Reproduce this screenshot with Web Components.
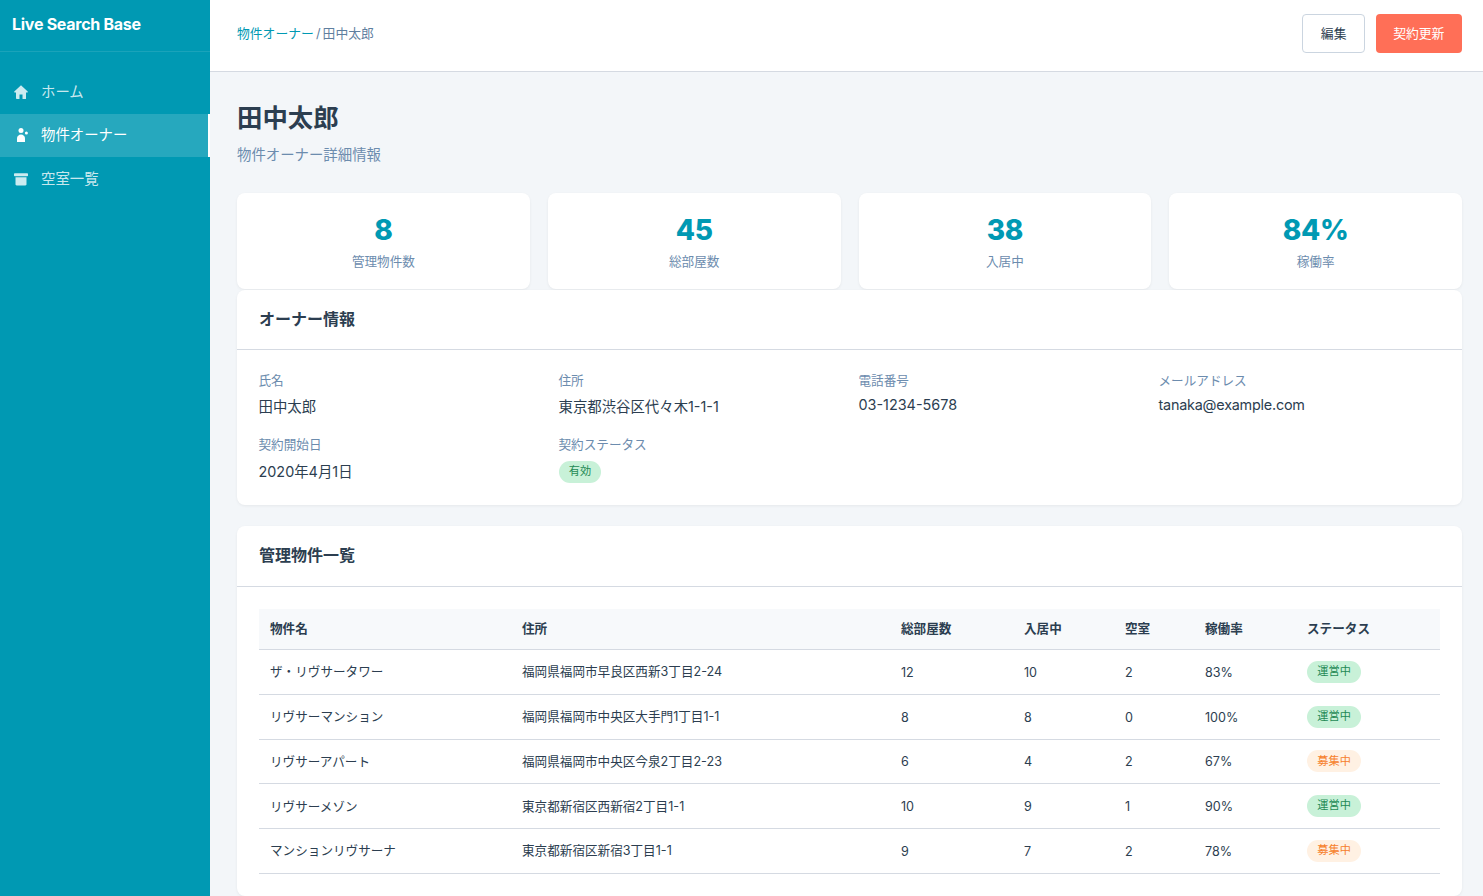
<!DOCTYPE html>
<html lang="ja">
<head>
<meta charset="utf-8">
<title>田中太郎</title>
<style>
  html, body { margin: 0; height: 100%; overflow: hidden; }
  body {
    font-family: Inter, "Noto Sans CJK JP", sans-serif;
    color: #2c3e50;
    background: #f3f6f9;
  }
  app-shell { height: 896px; }
</style>
</head>
<body>

<app-shell>
  <side-bar slot="side" brand="Live Search Base">
    <nav-item icon="home">ホーム</nav-item>
    <nav-item icon="people" active>物件オーナー</nav-item>
    <nav-item icon="box">空室一覧</nav-item>
  </side-bar>

  <top-bar slot="top">
    <span slot="crumb"><a>物件オーナー</a> / 田中太郎</span>
    <ui-button>編集</ui-button>
    <ui-button primary>契約更新</ui-button>
  </top-bar>

  <page-head title="田中太郎" sub="物件オーナー詳細情報"></page-head>

  <stat-row>
    <stat-card value="8" label="管理物件数"></stat-card>
    <stat-card value="45" label="総部屋数"></stat-card>
    <stat-card value="38" label="入居中"></stat-card>
    <stat-card value="84%" label="稼働率"></stat-card>
  </stat-row>

  <info-card heading="オーナー情報">
    <owner-info></owner-info>
  </info-card>

  <info-card heading="管理物件一覧" style="margin-top:21px; --head-h:60.6px">
    <property-table></property-table>
  </info-card>
</app-shell>

<script>
const ICONS = {
  home: '<path d="M7 .2.3 6.600c-.3.3-.1.9.3.9H2v5.700c0 .5.3.8.8.8h2.700V9.500h3v4.900h2.700c.5 0 .8-.3.8-.8V7.500h1.400c.4 0 .6-.6.3-.9z"/>',
  people: '<circle cx="7" cy="2.600" r="2.500"/><path d="M3 14V10.500C3 8.300 4.800 6.600 7 6.600s4 1.700 4 3.900V14z"/><circle cx="12.400" cy="5" r="1.500"/>',
  box: '<rect y="1.300" width="14" height="3" rx=".8"/><path d="M1.500 5.300h11v7c0 .6-.5 1.100-1.100 1.100H2.600c-.6 0-1.100-.5-1.100-1.100z"/>'
};

class AppShell extends HTMLElement {
  constructor() {
    super();
    this.attachShadow({ mode: 'open' }).innerHTML = `
      <style>
        :host { display: grid; grid-template-columns: 210px 1fr; overflow: hidden; }
        .col { display: flex; flex-direction: column; min-width: 0; height: 896px; overflow: hidden; }
        main { padding: 0 21px 0 27px; display: flex; flex-direction: column; }
      </style>
      <slot name="side"></slot>
      <div class="col">
        <slot name="top"></slot>
        <main><slot></slot></main>
      </div>`;
  }
}

class SideBar extends HTMLElement {
  constructor() {
    super();
    this.attachShadow({ mode: 'open' }).innerHTML = `
      <style>
        :host { display: block; background: #0099b3; height: 896px; }
        .brand {
          height: 52px; box-sizing: border-box; padding: 0 0 3px 12px;
          display: flex; align-items: center;
          font-size: 16px; font-weight: 700; color: #fff; letter-spacing: -.27px;
          border-bottom: 1px solid rgba(255,255,255,.1);
        }
        nav { padding-top: 18px; display: flex; flex-direction: column; }
      </style>
      <div class="brand"></div>
      <nav><slot></slot></nav>`;
    this.shadowRoot.querySelector('.brand').textContent = this.getAttribute('brand');
  }
}

class NavItem extends HTMLElement {
  constructor() {
    super();
    const active = this.hasAttribute('active');
    this.attachShadow({ mode: 'open' }).innerHTML = `
      <style>
        :host {
          display: flex; align-items: center; height: 43.5px; box-sizing: border-box;
          padding-left: 14px; gap: 13px; font-size: 14.4px;
          color: rgba(255,255,255,${active ? 1 : .8});
          background: ${active ? 'rgba(255,255,255,.15)' : 'transparent'};
          border-right: ${active ? '2px solid #fff' : '0'};
        }
        svg { width: 14px; height: 14px; fill: currentColor; flex: none; }
        span { padding-bottom: 3.5px; }
      </style>
      <svg viewBox="0 0 14 14">${ICONS[this.getAttribute('icon')]}</svg>
      <span><slot></slot></span>`;
  }
}

class TopBar extends HTMLElement {
  constructor() {
    super();
    this.attachShadow({ mode: 'open' }).innerHTML = `
      <style>
        :host {
          display: flex; align-items: center; justify-content: space-between;
          height: 72px; box-sizing: border-box; flex: none;
          padding: 0 21px 4px 27px; background: #fff; border-bottom: 1px solid #d5dae2;
          font-size: 12.8px; color: #5f7f9f;
        }
        .actions { display: flex; gap: 10.6px; }
        ::slotted(span) { color: #5f7f9f; margin-top: -3px; word-spacing: -1.5px; }
      </style>
      <slot name="crumb"></slot>
      <div class="actions"><slot></slot></div>`;
    const link = this.querySelector('a');
    if (link) link.style.color = '#0099b3';
  }
}

class UiButton extends HTMLElement {
  constructor() {
    super();
    const primary = this.hasAttribute('primary');
    this.attachShadow({ mode: 'open' }).innerHTML = `
      <style>
        :host {
          display: flex; align-items: center; justify-content: center;
          height: 39px; box-sizing: border-box; padding: 0 17.6px 3px;
          border-radius: 4px; font-size: 12.8px;
          background: ${primary ? '#ff6f57' : '#fff'};
          color: ${primary ? '#fff' : '#2c3e50'};
          border: ${primary ? '0' : '1px solid #cbd5e0'};
        }
      </style>
      <slot></slot>`;
  }
}

class PageHead extends HTMLElement {
  constructor() {
    super();
    this.attachShadow({ mode: 'open' }).innerHTML = `
      <style>
        :host { display: block; padding-top: 29px; margin-bottom: 28px; }
        h1 { margin: 0; font-size: 25.4px; line-height: 34px; font-weight: 700; color: #2c3e50; }
        p { margin: 10px 0 0; font-size: 14.4px; line-height: 20px; color: #6c8cae; }
      </style>
      <h1></h1><p></p>`;
    this.shadowRoot.querySelector('h1').textContent = this.getAttribute('title');
    this.shadowRoot.querySelector('p').textContent = this.getAttribute('sub');
    this.removeAttribute('title');
  }
}

class StatRow extends HTMLElement {
  constructor() {
    super();
    this.attachShadow({ mode: 'open' }).innerHTML = `
      <style>:host { display: grid; grid-template-columns: repeat(4, 1fr); gap: 18px; margin-bottom: 1px; }</style>
      <slot></slot>`;
  }
}

class StatCard extends HTMLElement {
  constructor() {
    super();
    this.attachShadow({ mode: 'open' }).innerHTML = `
      <style>
        :host {
          display: flex; flex-direction: column; align-items: center;
          height: 96px; box-sizing: border-box; padding-top: 19px;
          background: #fff; border-radius: 8px; box-shadow: 0 1px 3px rgba(0,0,0,.06);
        }
        .v { font-size: 28px; line-height: 36px; font-weight: 800; letter-spacing: -.3px; color: #0099b3; }
        .l { margin-top: 5px; font-size: 12.6px; line-height: 18px; color: #6c8cae; }
      </style>
      <div class="v"></div><div class="l"></div>`;
    this.shadowRoot.querySelector('.v').textContent = this.getAttribute('value');
    this.shadowRoot.querySelector('.l').textContent = this.getAttribute('label');
  }
}

class InfoCard extends HTMLElement {
  constructor() {
    super();
    this.attachShadow({ mode: 'open' }).innerHTML = `
      <style>
        :host { display: block; background: #fff; border-radius: 8px; box-shadow: 0 1px 3px rgba(0,0,0,.06); }
        h2 {
          margin: 0; height: var(--head-h, 60px); box-sizing: border-box; padding: 0 0 3px 22px;
          display: flex; align-items: center;
          font-size: 16px; font-weight: 700; color: #2c3e50;
          border-bottom: 1px solid #d5dae2;
        }
        .body { padding: 22px; }
      </style>
      <h2></h2>
      <div class="body"><slot></slot></div>`;
    this.shadowRoot.querySelector('h2').textContent = this.getAttribute('heading');
  }
}

class StatusPill extends HTMLElement {
  constructor() {
    super();
    const warn = this.getAttribute('tone') === 'warn';
    this.attachShadow({ mode: 'open' }).innerHTML = `
      <style>
        :host {
          display: inline-flex; align-items: center; justify-content: center; box-sizing: border-box;
          height: 22px; padding: 0 10.3px 1.5px; border-radius: 11px; font-size: 11.2px;
          background: ${warn ? '#fff1e3' : '#c8f1d8'};
          color: ${warn ? '#f6802b' : '#1f8a55'};
        }
      </style>
      <slot></slot>`;
  }
}

class OwnerInfo extends HTMLElement {
  constructor() {
    super();
    const item = (k, v, cls = '') => `<div><dt>${k}</dt><dd class="${cls}">${v}</dd></div>`;
    this.attachShadow({ mode: 'open' }).innerHTML = `
      <style>
        :host { display: block; margin-left: -.5px; }
        dl { margin: 0; display: grid; grid-template-columns: repeat(4, 280px); row-gap: 19.5px; column-gap: 20px; }
        dt { font-size: 12.6px; line-height: 18px; color: #6c8cae; margin-bottom: 5.5px; }
        dd { margin: 0; font-size: 14.4px; line-height: 21px; color: #2c3e50; }
        dd.latin { margin-top: -2px; }
        dd.mail { letter-spacing: -.22px; }
        dd.date { padding-top: 1px; }
        dd.pill { padding-top: 1.5px; line-height: 0; }
      </style>
      <dl>
        ${item('氏名', '田中太郎')}
        ${item('住所', '東京都渋谷区代々木1-1-1')}
        ${item('電話番号', '03-1234-5678', 'latin')}
        ${item('メールアドレス', 'tanaka@example.com', 'latin mail')}
        ${item('契約開始日', '2020年4月1日', 'date')}
        ${item('契約ステータス', '<status-pill>有効</status-pill>', 'pill')}
      </dl>`;
  }
}

class PropertyTable extends HTMLElement {
  constructor() {
    super();
    const rows = [
      ['ザ・リヴサータワー', '福岡県福岡市早良区西新3丁目2-24', 12, 10, 2, '83%', '運営中'],
      ['リヴサーマンション', '福岡県福岡市中央区大手門1丁目1-1', 8, 8, 0, '100%', '運営中'],
      ['リヴサーアパート', '福岡県福岡市中央区今泉2丁目2-23', 6, 4, 2, '67%', '募集中'],
      ['リヴサーメゾン', '東京都新宿区西新宿2丁目1-1', 10, 9, 1, '90%', '運営中'],
      ['マンションリヴサーナ', '東京都新宿区新宿3丁目1-1', 9, 7, 2, '78%', '募集中']
    ];
    const body = rows.map((r) => `<tr>
      ${r.slice(0, 6).map((c) => `<td>${c}</td>`).join('')}
      <td class="st"><status-pill ${r[6] === '募集中' ? 'tone="warn"' : ''}>${r[6]}</status-pill></td>
    </tr>`).join('');
    this.attachShadow({ mode: 'open' }).innerHTML = `
      <style>
        :host { display: block; }
        table { width: 100%; border-collapse: collapse; table-layout: fixed; font-size: 12.6px; }
        th {
          height: 41px; box-sizing: border-box; padding: 0 11px 3px; text-align: left; font-size: 12.6px; font-weight: 600;
          background: #f7f9fb; color: #2c3e50; border-bottom: 1px solid #d5dae2;
        }
        td {
          height: 44.75px; box-sizing: border-box; padding: 1px 11px 0;
          color: #2c3e50; border-bottom: 1px solid #d5dae2;
        }
        td:nth-child(-n+2) { padding: 0 11px 2px; }
        td.st { padding: 0 11px; line-height: 0; }
        status-pill { vertical-align: middle; }
      </style>
      <table>
        <colgroup>
          <col style="width:252px"><col style="width:379px"><col style="width:123px">
          <col style="width:101px"><col style="width:80px"><col style="width:102px"><col>
        </colgroup>
        <thead><tr>
          <th>物件名</th><th>住所</th><th>総部屋数</th><th>入居中</th><th>空室</th><th>稼働率</th><th>ステータス</th>
        </tr></thead>
        <tbody>${body}</tbody>
      </table>`;
  }
}

customElements.define('app-shell', AppShell);
customElements.define('side-bar', SideBar);
customElements.define('nav-item', NavItem);
customElements.define('top-bar', TopBar);
customElements.define('ui-button', UiButton);
customElements.define('page-head', PageHead);
customElements.define('stat-row', StatRow);
customElements.define('stat-card', StatCard);
customElements.define('info-card', InfoCard);
customElements.define('status-pill', StatusPill);
customElements.define('owner-info', OwnerInfo);
customElements.define('property-table', PropertyTable);
</script>
</body>
</html>
